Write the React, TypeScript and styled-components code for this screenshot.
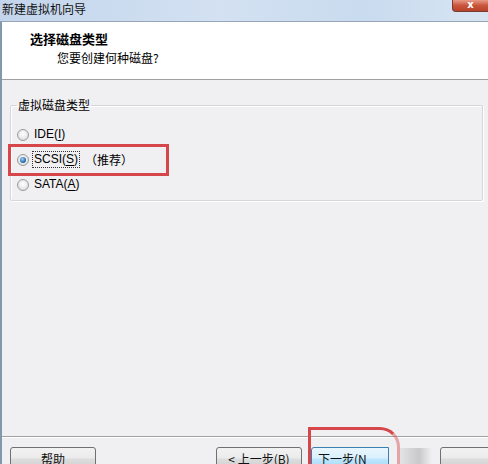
import React from "react";
import styled, { createGlobalStyle } from "styled-components";

const GlobalStyle = createGlobalStyle`
  html, body {
    margin: 0;
    padding: 0;
    overflow: hidden;
    background: #f0eff1;
  }
  * { box-sizing: border-box; }
`;

const FONT = `"Noto Sans CJK SC", "DejaVu Sans", sans-serif`;

type Option = { label: string; key: string; checked?: boolean; note?: string };

const options: Option[] = [
  { label: "IDE", key: "I" },
  { label: "SCSI", key: "S", checked: true, note: "（推荐）" },
  { label: "SATA", key: "A" },
];

const App: React.FC = () => {
  return (
    <Window>
      <GlobalStyle />
      <TitleBar>
        <TitleText>新建虚拟机向导</TitleText>
        <CloseButton>x</CloseButton>
      </TitleBar>
      <Frame>
        <Header>
          <HeaderTitle>选择磁盘类型</HeaderTitle>
          <HeaderSub>您要创建何种磁盘?</HeaderSub>
        </Header>
        <Content>
          <GroupBox>
            <Legend>虚拟磁盘类型</Legend>
            <RadioList>
              {options.map((o) => (
                <RadioRow key={o.label}>
                  <Radio $checked={o.checked} />
                  <RadioLabel $focused={o.checked}>
                    {o.label}(<u>{o.key}</u>)
                  </RadioLabel>
                  {o.note && <Note>{o.note}</Note>}
                </RadioRow>
              ))}
            </RadioList>
          </GroupBox>
          <Highlight />
        </Content>
        <Footer>
          <Button $width={86}>帮助</Button>
          <Spacer $width={112} />
          <Button $width={86}>&lt; 上一步(B)</Button>
          <NextButton>下一步(N</NextButton>
          <NextMark />
          <Smudge />
          <Button $width={60} />
        </Footer>
      </Frame>
    </Window>
  );
};

export default App;

const Window = styled.div`
  width: 488px;
  height: 464px;
  display: flex;
  flex-direction: column;
  font-family: ${FONT};
  color: #000;
  overflow: hidden;
`;

const TitleBar = styled.div`
  height: 21px;
  display: flex;
  align-items: flex-start;
  background: linear-gradient(90deg, #c3d5ec 0%, #d3e1f2 45%, #c9dbef 75%, #d8e5f3 100%);
`;

const TitleText = styled.div`
  font-size: 12px;
  line-height: 16px;
  padding: 1px 0 0 2px;
  color: #111;
`;

const CloseButton = styled.div`
  margin-left: auto;
  width: 36px;
  height: 12px;
  border: 1px solid #7a3b30;
  border-top: none;
  border-right: none;
  border-radius: 0 0 0 4px;
  background: linear-gradient(180deg, #e79a86 0%, #c9553c 50%, #b8432b 100%);
  color: #fff;
  font: bold 10px/10px "DejaVu Sans", sans-serif;
  text-align: center;
`;

const Frame = styled.div`
  flex: 1;
  display: flex;
  flex-direction: column;
  border-left: 2px solid #8497ae;
  border-top: 1px solid #97a6b6;
  min-height: 0;
`;

const Header = styled.div`
  height: 58px;
  background: #fff;
  border-bottom: 1px solid #a0a0a0;
  padding: 8px 0 0 28px;
`;

const HeaderTitle = styled.div`
  font-size: 13px;
  font-weight: bold;
  line-height: 17px;
`;

const HeaderSub = styled.div`
  font-size: 12px;
  line-height: 16px;
  margin: 3px 0 0 27px;
`;

const Content = styled.div`
  flex: 1;
  position: relative;
  padding: 18px 5px 0 8px;
  background: #f0eff1;
`;

const GroupBox = styled.fieldset`
  margin: 0;
  padding: 4px 0 0 6px;
  height: 103px;
  border: 1px solid #d6d5d9;
  box-shadow: inset 1px 1px 0 #fff, 1px 1px 0 #fff;
  border-radius: 2px;
`;

const Legend = styled.legend`
  font-size: 12px;
  line-height: 14px;
  padding: 0 1px;
  margin-left: 0;
`;

const RadioList = styled.div`
  display: flex;
  flex-direction: column;
  gap: 8px;
  padding-top: 10px;
`;

const RadioRow = styled.div`
  display: flex;
  align-items: center;
  height: 17px;
  font-size: 12px;
`;

const Radio = styled.span<{ $checked?: boolean }>`
  width: 12px;
  height: 12px;
  border-radius: 50%;
  border: 1px solid #9a9a9a;
  background: radial-gradient(circle at 50% 40%, #ffffff 0%, #e6e6e6 60%, #cfcfcf 100%);
  display: flex;
  align-items: center;
  justify-content: center;
  margin-right: 4px;
  &::after {
    content: "";
    display: ${({ $checked }) => ($checked ? "block" : "none")};
    width: 6px;
    height: 6px;
    border-radius: 50%;
    background: radial-gradient(circle at 40% 35%, #9fd0f2 0%, #2a6fb3 60%, #14477e 100%);
  }
`;

const RadioLabel = styled.span<{ $focused?: boolean }>`
  font-family: "Liberation Sans", "Noto Sans CJK SC", sans-serif;
  font-size: 12px;
  line-height: 15px;
  padding: 0 1px;
  outline: ${({ $focused }) => ($focused ? "1px dotted #333" : "none")};
  u { text-decoration-thickness: 1px; text-underline-offset: 2px; }
`;

const Note = styled.span`
  font-size: 12px;
  margin-left: 6px;
`;

const Highlight = styled.div`
  position: absolute;
  left: 6px;
  top: 64px;
  width: 161px;
  height: 32px;
  border: 3px solid #d5474b;
  pointer-events: none;
`;

const Footer = styled.div`
  height: 28px;
  border-top: 1px solid #a0a0a0;
  box-shadow: inset 0 1px 0 #fff;
  display: flex;
  align-items: flex-start;
  padding: 10px 0 0 8px;
  position: relative;
  background: #f0eff1;
`;

const Spacer = styled.div<{ $width: number }>`
  width: ${({ $width }) => $width}px;
  flex: none;
`;

const Button = styled.div<{ $width: number }>`
  flex: none;
  width: ${({ $width }) => $width}px;
  height: 23px;
  border: 1px solid #707070;
  border-radius: 3px;
  background: linear-gradient(180deg, #f2f2f2 0%, #ebebeb 48%, #dddddd 52%, #cfcfcf 100%);
  font-size: 12px;
  line-height: 21px;
  text-align: center;
  color: #111;
  margin-right: 8px;
`;

const NextButton = styled.div`
  flex: none;
  width: 78px;
  height: 23px;
  margin-left: 1px;
  border: 1px solid #3c7fb1;
  border-radius: 3px 0 0 0;
  background: linear-gradient(180deg, #eaf6fd 0%, #d9f0fc 48%, #bee6fd 52%, #a7d9f5 100%);
  font-size: 12px;
  line-height: 21px;
  padding-left: 6px;
  color: #111;
`;

const NextMark = styled.div`
  position: absolute;
  left: 306px;
  top: -10px;
  width: 92px;
  height: 40px;
  border: 3px solid #d5474b;
  border-right-color: rgba(213, 71, 75, 0.45);
  border-bottom: none;
  border-radius: 0 20px 0 0;
  pointer-events: none;
`;

const Smudge = styled.div`
  flex: none;
  width: 32px;
  height: 23px;
  margin: 1px 8px 0 11px;
  background: linear-gradient(90deg, #e3e3e5 0%, #c9c9cb 60%, #f0eff1 100%);
`;
